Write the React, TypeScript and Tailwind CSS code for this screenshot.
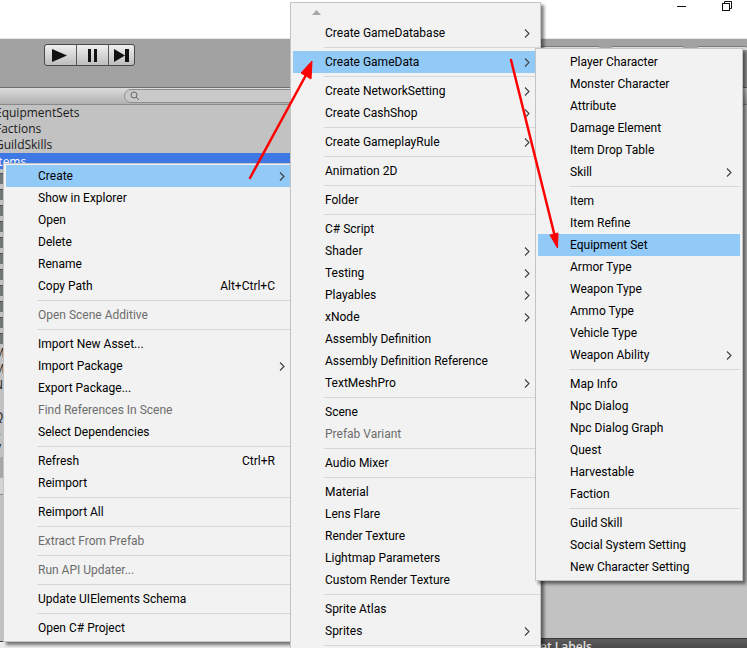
import React from 'react';

type Row = {
  label?: string;
  sep?: boolean;
  sub?: boolean;
  off?: boolean;
  hot?: boolean;
  keys?: string;
};

const s: Row = { sep: true };
const t = (label: string, extra: Partial<Row> = {}): Row => ({ label, ...extra });

const assetMenu: Row[] = [
  t('Create', { sub: true, hot: true }),
  t('Show in Explorer'),
  t('Open'),
  t('Delete'),
  t('Rename'),
  t('Copy Path', { keys: 'Alt+Ctrl+C' }),
  s,
  t('Open Scene Additive', { off: true }),
  s,
  t('Import New Asset...'),
  t('Import Package', { sub: true }),
  t('Export Package...'),
  t('Find References In Scene', { off: true }),
  t('Select Dependencies'),
  s,
  t('Refresh', { keys: 'Ctrl+R' }),
  t('Reimport'),
  s,
  t('Reimport All'),
  s,
  t('Extract From Prefab', { off: true }),
  s,
  t('Run API Updater...', { off: true }),
  s,
  t('Update UIElements Schema'),
  s,
  t('Open C# Project'),
];

const createMenu: Row[] = [
  t('Create GameDatabase', { sub: true }),
  s,
  t('Create GameData', { sub: true, hot: true }),
  s,
  t('Create NetworkSetting', { sub: true }),
  t('Create CashShop', { sub: true }),
  s,
  t('Create GameplayRule', { sub: true }),
  s,
  t('Animation 2D'),
  s,
  t('Folder'),
  s,
  t('C# Script'),
  t('Shader', { sub: true }),
  t('Testing', { sub: true }),
  t('Playables', { sub: true }),
  t('xNode', { sub: true }),
  t('Assembly Definition'),
  t('Assembly Definition Reference'),
  t('TextMeshPro', { sub: true }),
  s,
  t('Scene'),
  t('Prefab Variant', { off: true }),
  s,
  t('Audio Mixer'),
  s,
  t('Material'),
  t('Lens Flare'),
  t('Render Texture'),
  t('Lightmap Parameters'),
  t('Custom Render Texture'),
  s,
  t('Sprite Atlas'),
  t('Sprites', { sub: true }),
  s,
];

const dataMenu: Row[] = [
  t('Player Character'),
  t('Monster Character'),
  t('Attribute'),
  t('Damage Element'),
  t('Item Drop Table'),
  t('Skill', { sub: true }),
  s,
  t('Item'),
  t('Item Refine'),
  t('Equipment Set', { hot: true }),
  t('Armor Type'),
  t('Weapon Type'),
  t('Ammo Type'),
  t('Vehicle Type'),
  t('Weapon Ability', { sub: true }),
  s,
  t('Map Info'),
  t('Npc Dialog'),
  t('Npc Dialog Graph'),
  t('Quest'),
  t('Harvestable'),
  t('Faction'),
  s,
  t('Guild Skill'),
  t('Social System Setting'),
  t('New Character Setting'),
];

const iconRows = Array.from({ length: 11 }, (_, i) => i);

function MenuRows({ rows, chevron = 'right-[10px]' }: { rows: Row[]; chevron?: string }) {
  return (
    <>
      {rows.map((r, i) =>
        r.sep ? (
          <div key={i} className="h-[7px] pl-[31px] flex items-center">
            <div className="h-px w-full bg-[#d7d7d7]" />
          </div>
        ) : (
          <div
            key={i}
            className={`relative h-[22px] pl-[32px] leading-[22px] whitespace-nowrap ${
              r.hot ? 'bg-[#91c9f7]' : ''
            } ${r.off ? 'text-[#6d6d6d]' : 'text-black'}`}
          >
            {r.label}
            {r.keys && <span className="absolute right-[20px] top-0">{r.keys}</span>}
            {r.sub && (
              <svg width="6" height="9" viewBox="0 0 6 9" className={`absolute top-[7px] ${chevron}`}>
                <path d="M1 0.5 L5 4.5 L1 8.5" fill="none" stroke="#404040" strokeWidth="1.1" />
              </svg>
            )}
          </div>
        ),
      )}
    </>
  );
}

export default function App() {
  return (
    <div className="relative w-[747px] h-[648px] overflow-hidden bg-white font-['Roboto','Open_Sans',sans-serif] text-[12px]">
      {/* 뒤쪽 에디터 */}
      <div className="h-[38px] bg-white" />
      <div className="h-[1px] bg-[#e8e8e8]" />
      <div className="h-[49px] bg-[#a2a2a2] border-b border-[#6e6e6e] pl-[44px] pt-[5px] flex items-start">
        <div className="flex w-[95px] h-[22px] rounded-[3px] border border-[#4a4a4a] bg-gradient-to-b from-[#f0f0f0] to-[#bdbdbd]">
          <div className="w-[32px] flex items-center justify-center border-r border-[#5a5a5a] pr-[2px]">
            <svg width="15" height="13" viewBox="0 0 15 13">
              <path d="M0 0 L15 6.5 L0 13 Z" fill="#111" />
            </svg>
          </div>
          <div className="w-[32px] flex items-center justify-center gap-[3px] border-r border-[#5a5a5a]">
            <div className="w-[3px] h-[13px] bg-[#111]" />
            <div className="w-[3px] h-[13px] bg-[#111]" />
          </div>
          <div className="flex-1 flex items-center justify-center">
            <svg width="15" height="13" viewBox="0 0 15 13">
              <path d="M0 0 L11 6.5 L0 13 Z M11 0 H15 V13 H11 Z" fill="#111" />
            </svg>
          </div>
        </div>
        <div className="ml-[403px] mt-[2px] w-[65px] h-[4px] rounded-t-[2px] bg-[#dcdcdc] border-t border-[#7a7a7a]" />
        <div className="ml-[11px] mt-[2px] w-[77px] h-[4px] rounded-t-[2px] bg-[#dcdcdc] border-t border-[#7a7a7a]" />
        <div className="ml-[13px] mt-[2px] w-[50px] shrink-0 h-[4px] rounded-t-[2px] bg-[#dcdcdc] border-t border-[#7a7a7a]" />
      </div>
      <div className="h-[17px] bg-gradient-to-b from-[#dcdcdc] to-[#b0b0b0] border-b border-[#8a8a8a] pl-[124px] pt-[1px]">
        <div className="relative h-[14px] w-[300px] rounded-l-full border border-[#8e8e8e] bg-[#c9c9c9]">
          <svg width="10" height="10" viewBox="0 0 10 10" className="absolute left-[5px] top-[1px]">
            <circle cx="4" cy="4" r="3" fill="none" stroke="#666" />
            <path d="M6 6 L9 9" stroke="#666" />
          </svg>
        </div>
      </div>
      <div className="flex h-[543px]">
        {/* 프로젝트 목록 */}
        <div className="w-[291px] shrink-0 flex flex-col">
          <div className="h-[537px] bg-[#c2c2c2] text-[#1a1a1a] overflow-hidden border-b border-[#3c3c3c] font-['Open_Sans',sans-serif]">
            <div className="-ml-[5px]">
              <div className="h-[16px] leading-[16px]">EquipmentSets</div>
              <div className="h-[16px] leading-[16px]">Factions</div>
              <div className="h-[16px] leading-[16px]">GuildSkills</div>
              <div className="h-[16px] leading-[18px] bg-[#3e78e4] text-white">Items</div>
            </div>
            {iconRows.map((i) => (
              <div key={i} className="h-[16px] pt-[4px]">
                <div className="w-[3px] h-[11px] border-t border-[#4f4f4f] bg-[#6f7777]" />
              </div>
            ))}
            <div className="-ml-[6px]">
              {['M', 'M', 'N', ',', 'Q', 'S', 'V'].map((c, i) => (
                <div key={i} className="h-[16px] leading-[16px]">
                  {c}
                </div>
              ))}
            </div>
            <div className="h-[21px] bg-[#a8a8a8]" />
            <div className="h-[17px] bg-[#d4d4d4] border-b border-[#8a8a8a]" />
          </div>
          <div className="flex-1 bg-[#ececec]" />
        </div>
        <div className="flex-1 flex flex-col">
          <div className="h-[533px] bg-[#c2c2c2]" />
          <div className="h-[10px] bg-gradient-to-b from-[#5c5c5c] to-[#4a4a4a] border-t border-[#3a3a3a] pl-[249px] text-[#e0e0e0] font-['Open_Sans',sans-serif] font-semibold leading-[16px] overflow-hidden">
            et Labels
          </div>
        </div>
      </div>

      {/* 창 버튼 */}
      <svg width="60" height="14" viewBox="0 0 60 14" className="absolute left-[676px] top-0">
        <path d="M1 6.5 H10" stroke="#111" />
        <rect x="46.5" y="3.5" width="7" height="7" fill="#fff" stroke="#111" />
        <path d="M48.5 3.5 V1.5 H55.5 V8.5 H53.5" fill="none" stroke="#111" />
      </svg>

      {/* 메뉴 */}
      <div className="absolute left-[3px] top-[163px] w-[293px] h-[479px] bg-[#f2f2f2] border border-[#c4c4c4] pl-[2px] pt-[1px] shadow-[3px_3px_3px_rgba(0,0,0,0.5)]">
        <MenuRows rows={assetMenu} />
      </div>

      <div className="absolute left-[290px] top-[2px] w-[251px] h-[660px] bg-[#f2f2f2] border border-[#c4c4c4] pl-[2px] shadow-[3px_3px_3px_rgba(0,0,0,0.5)]">
        <div className="h-[19px] pl-[19px] pt-[7px]">
          <svg width="9" height="5" viewBox="0 0 9 5" className="block">
            <path d="M0 5 L4.5 0 L9 5 Z" fill="#a6a6a6" />
          </svg>
        </div>
        <MenuRows rows={createMenu} />
      </div>

      <div className="absolute left-[535px] top-[48px] w-[208px] h-[533px] bg-[#f2f2f2] border border-[#c4c4c4] pl-[2px] pr-[2px] pt-[2px] shadow-[3px_3px_3px_rgba(0,0,0,0.5)]">
        <MenuRows rows={dataMenu} chevron="right-[8px]" />
      </div>

      {/* 빨간 화살표 */}
      <svg width="747" height="648" viewBox="0 0 747 648" className="absolute left-0 top-0 pointer-events-none">
        <path d="M250 178 L306 75" stroke="#f00" strokeWidth="2.5" strokeLinecap="round" />
        <path d="M312 61 L301 73 L311 79 Z" fill="#f00" stroke="#f00" />
        <path d="M511 60 L554 233" stroke="#f00" strokeWidth="2.5" strokeLinecap="round" />
        <path d="M557.5 248 L550 235 L558 233 Z" fill="#f00" stroke="#f00" />
      </svg>
    </div>
  );
}
